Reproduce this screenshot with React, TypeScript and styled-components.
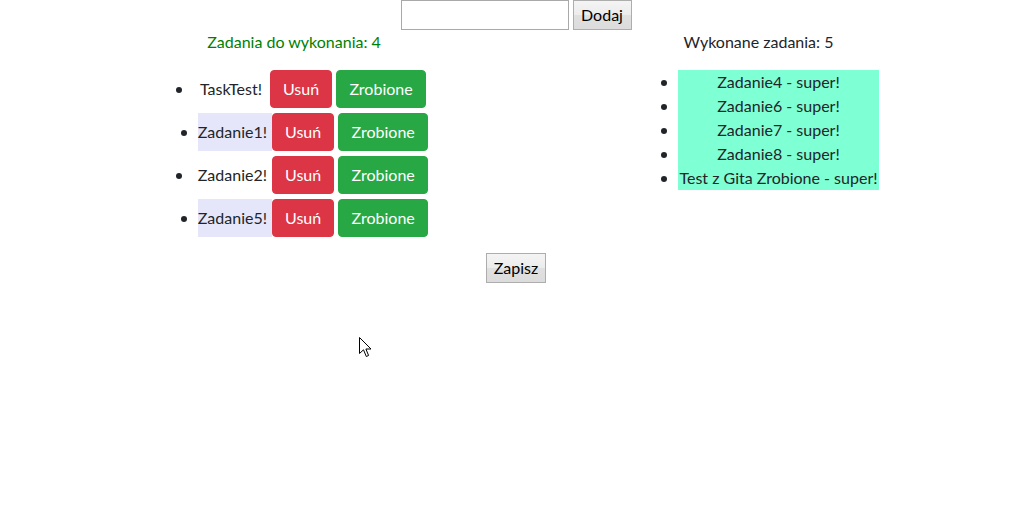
import React from "react";
import styled, { createGlobalStyle } from "styled-components";

const GlobalStyle = createGlobalStyle`
  *, *::before, *::after { box-sizing: border-box; }
  html, body { margin: 0; padding: 0; background: #ffffff; }
  body {
    font-family: Lato, "Noto Sans", sans-serif;
    font-size: 16px;
    line-height: 1.5;
    color: #212529;
  }
`;

const Page = styled.div`
  position: relative;
  width: 1032px;
  min-height: 509px;
`;

const AddBar = styled.div`
  display: flex;
  justify-content: center;
  gap: 4px;
`;

const TextInput = styled.input`
  width: 168px;
  height: 30px;
  margin: 0;
  padding: 1px 2px;
  border: 1px solid #a9a9a9;
  font: inherit;
  background: #fff;
  outline: none;
`;

const PlainButton = styled.button<{ $w: number }>`
  width: ${(p) => p.$w}px;
  height: 30px;
  margin: 0;
  padding: 0;
  font: inherit;
  line-height: 24px;
  color: #000;
  border: 1px solid #adadad;
  border-radius: 0;
  background: linear-gradient(#f4f4f4 0%, #ececec 50%, #e0e0e0 51%, #dcdcdc 100%);
  cursor: default;
`;

const Columns = styled.div`
  display: flex;
  align-items: flex-start;
  padding-left: 158px;
  gap: 208px;
`;

const Column = styled.section<{ $w: number }>`
  width: ${(p) => p.$w}px;
`;

const Heading = styled.p<{ $color: string }>`
  margin: 0 0 16px;
  text-align: center;
  color: ${(p) => p.$color};
`;

const List = styled.ul<{ $gap: number }>`
  list-style: none;
  margin: 0 0 16px;
  padding: 0 0 0 40px;
  display: flex;
  flex-direction: column;
  gap: ${(p) => p.$gap}px;
`;

const Item = styled.li<{ $bullet: number; $bg?: string }>`
  position: relative;
  display: flex;
  justify-content: center;
  align-items: center;
  background: ${(p) => p.$bg ?? "transparent"};
  &::before {
    content: "";
    position: absolute;
    left: ${(p) => p.$bullet}px;
    top: 50%;
    width: 6px;
    height: 6px;
    margin-top: -2px;
    border-radius: 50%;
    background: #212529;
  }
`;

const TaskRow = styled.div`
  display: flex;
  align-items: stretch;
`;

const TaskName = styled.span<{ $striped: boolean }>`
  display: flex;
  align-items: center;
  min-width: 70px;
  padding-right: 5px;
  background: ${(p) => (p.$striped ? "#e6e6fa" : "transparent")};
`;

const ActionButton = styled.button<{ $variant: "danger" | "success" }>`
  min-width: ${(p) => (p.$variant === "danger" ? 62 : 90)}px;
  margin: 0 ${(p) => (p.$variant === "danger" ? 4 : 2)}px 0 0;
  padding: 6px 12px;
  font: inherit;
  line-height: 24px;
  color: #fff;
  border-radius: 4px;
  border: 1px solid ${(p) => (p.$variant === "danger" ? "#dc3545" : "#28a745")};
  background: ${(p) => (p.$variant === "danger" ? "#dc3545" : "#28a745")};
  cursor: pointer;
`;

const DoneText = styled.span`
  display: block;
  width: 100%;
  text-align: center;
  line-height: 24px;
`;

const SaveBar = styled.div`
  display: flex;
  justify-content: center;
`;

const Cursor = styled.svg`
  position: absolute;
  left: 359px;
  top: 337px;
`;

const todo = [
  { name: "TaskTest!", striped: false },
  { name: "Zadanie1!", striped: true },
  { name: "Zadanie2!", striped: false },
  { name: "Zadanie5!", striped: true },
];

const done = [
  "Zadanie4 - super!",
  "Zadanie6 - super!",
  "Zadanie7 - super!",
  "Zadanie8 - super!",
  "Test z Gita Zrobione - super!",
];

export default function App() {
  return (
    <Page>
      <GlobalStyle />
      <AddBar>
        <TextInput type="text" />
        <PlainButton $w={59}>Dodaj</PlainButton>
      </AddBar>
      <Columns>
        <Column $w={272}>
          <Heading $color="#008000">Zadania do wykonania: {todo.length}</Heading>
          <List $gap={5}>
            {todo.map((t) => (
              <Item key={t.name} $bullet={t.striped ? -17 : -22}>
                <TaskRow>
                  <TaskName $striped={t.striped}>{t.name}</TaskName>
                  <ActionButton $variant="danger">Usuń</ActionButton>
                  <ActionButton $variant="success">Zrobione</ActionButton>
                </TaskRow>
              </Item>
            ))}
          </List>
        </Column>
        <Column $w={241}>
          <Heading $color="#212529">Wykonane zadania: {done.length}</Heading>
          <List $gap={0}>
            {done.map((d) => (
              <Item key={d} $bullet={-17} $bg="#7fffd4">
                <DoneText>{d}</DoneText>
              </Item>
            ))}
          </List>
        </Column>
      </Columns>
      <SaveBar>
        <PlainButton $w={60}>Zapisz</PlainButton>
      </SaveBar>
      <Cursor width="13" height="21" viewBox="0 0 13 21">
        <path
          d="M0.5 0.5 L0.5 16.5 L4.5 12.8 L7.3 19.5 L9.6 18.5 L6.9 12 L12 12 Z"
          fill="#ffffff"
          stroke="#000000"
          strokeWidth="1"
          strokeLinejoin="miter"
        />
      </Cursor>
    </Page>
  );
}
